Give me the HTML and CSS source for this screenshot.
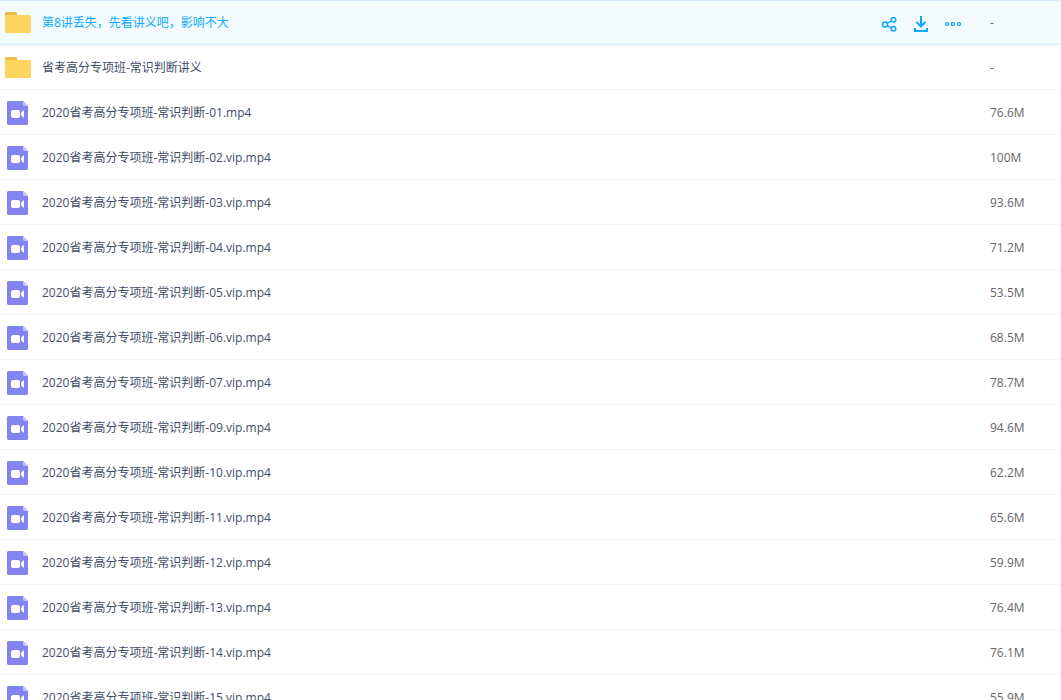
FILE: index.html
```html
<!DOCTYPE html>
<html lang="zh-CN">
<head>
<meta charset="utf-8">
<title>文件列表</title>
<link rel="stylesheet" href="styles.css">
</head>
<body>
<svg class="sprite" aria-hidden="true">
  <symbol id="folder" viewBox="0 0 26 22">
    <path fill="#e9bd48" d="M1 0h10l1 1v5H0V1z"/>
    <path fill="#ffd45c" d="M1 3h24l1 1v16l-1 1H1l-1-1V4z"/>
  </symbol>
  <symbol id="video" viewBox="0 0 21 24">
    <path fill="#8284f2" d="M1 0h15l5 5v18l-1 1H1l-1-1V1z"/>
    <path fill="#c3c4fa" d="M16 0l5 5h-4l-1-1z"/>
    <rect x="4" y="9" width="9" height="8" rx="2" fill="#fff"/>
    <path fill="#fff" d="M14 12l2-2.500h1v7h-1L14 14z"/>
  </symbol>
</svg>
<table class="files">
  <colgroup><col><col class="col-actions"><col class="col-size"></colgroup>
  <tbody id="rows">
    <tr class="row active">
      <td class="name"><div class="entry"><svg class="folder"><use href="#folder"/></svg><a href="#">第8讲丢失，先看讲义吧，影响不大</a></div></td>
      <td class="actions"><div class="tools">
        <button type="button" aria-label="分享"><svg viewBox="0 0 16 16"><g fill="none" stroke="#09aaff" stroke-width="1.500"><circle cx="4" cy="8.500" r="2.500"/><circle cx="12.500" cy="3.800" r="2.300"/><circle cx="12.500" cy="12.800" r="2.300"/><path d="M6.200 7.300l4.200-2.400M6.200 9.700l4.200 2.200"/></g></svg></button>
        <button type="button" aria-label="下载"><svg viewBox="0 0 16 16"><path fill="none" stroke="#09aaff" stroke-width="2" d="M8 0v11M3.500 6L8 10.500 12.500 6M2 12v3h12v-3"/></svg></button>
        <button type="button" aria-label="更多"><svg viewBox="0 0 16 16"><g fill="none" stroke="#09aaff" stroke-width="1.200"><rect x="0.600" y="6.600" width="2.800" height="2.800" rx="1"/><rect x="6.600" y="6.600" width="2.800" height="2.800" rx="0.500"/><rect x="12.600" y="6.600" width="2.800" height="2.800" rx="1"/></g></svg></button>
      </div></td>
      <td class="size">-</td>
    </tr>
    <tr class="row">
      <td class="name"><div class="entry"><svg class="folder"><use href="#folder"/></svg><a href="#">省考高分专项班-常识判断讲义</a></div></td>
      <td></td>
      <td class="size">-</td>
    </tr>
  </tbody>
</table>
<script src="files.js"></script>
</body>
</html>
```
FILE: styles.css
```css
body {
  margin: 0;
  height: 100vh;
  overflow: hidden;
  background: #fff;
  color: #424e67;
  font: 12px/18px "Open Sans", "Noto Sans CJK SC", sans-serif;
}

.sprite {
  display: none;
}

.files {
  width: 100%;
  table-layout: fixed;
  border-collapse: separate;
  border-spacing: 0;
}

.col-actions {
  width: 109px;
}

.col-size {
  width: 71px;
}

.row td {
  box-sizing: border-box;
  height: 45px;
  padding: 2px 0 0;
  border-bottom: 1px solid #f2f6fd;
  vertical-align: middle;
}

.row.active td {
  background: #f4fbff;
  border-bottom-color: #d4e9fb;
  box-shadow: inset 0 1px #d4e9fb;
}

.entry {
  display: flex;
  align-items: center;
  min-height: 24px;
  padding-left: 5px;
}

.entry svg {
  flex: none;
  margin-right: 11px;
}

.folder {
  width: 26px;
  height: 22px;
}

.entry .video {
  width: 21px;
  height: 24px;
  margin-left: 2px;
  margin-right: 14px;
}

.entry a {
  color: inherit;
  text-decoration: none;
  white-space: nowrap;
}

.active .entry a {
  color: #09aaff;
}

.tools {
  display: flex;
  gap: 16px;
  padding-top: 2px;
}

.tools button {
  width: 16px;
  height: 16px;
  padding: 0;
  border: 0;
  background: none;
  cursor: pointer;
}

.tools svg {
  display: block;
  width: 16px;
  height: 16px;
}

.row .size {
  color: #666;
}
```
FILE: files.js
```js
const videos = [
  ["01", "76.6M"],
  ["02.vip", "100M"],
  ["03.vip", "93.6M"],
  ["04.vip", "71.2M"],
  ["05.vip", "53.5M"],
  ["06.vip", "68.5M"],
  ["07.vip", "78.7M"],
  ["09.vip", "94.6M"],
  ["10.vip", "62.2M"],
  ["11.vip", "65.6M"],
  ["12.vip", "59.9M"],
  ["13.vip", "76.4M"],
  ["14.vip", "76.1M"],
  ["15.vip", "55.9M"]
];

document.getElementById("rows").insertAdjacentHTML("beforeend", videos.map(([part, size]) => `
  <tr class="row">
    <td class="name"><div class="entry"><svg class="video"><use href="#video"/></svg><a href="#">2020省考高分专项班-常识判断-${part}.mp4</a></div></td>
    <td></td>
    <td class="size">${size}</td>
  </tr>`).join(""));
```
